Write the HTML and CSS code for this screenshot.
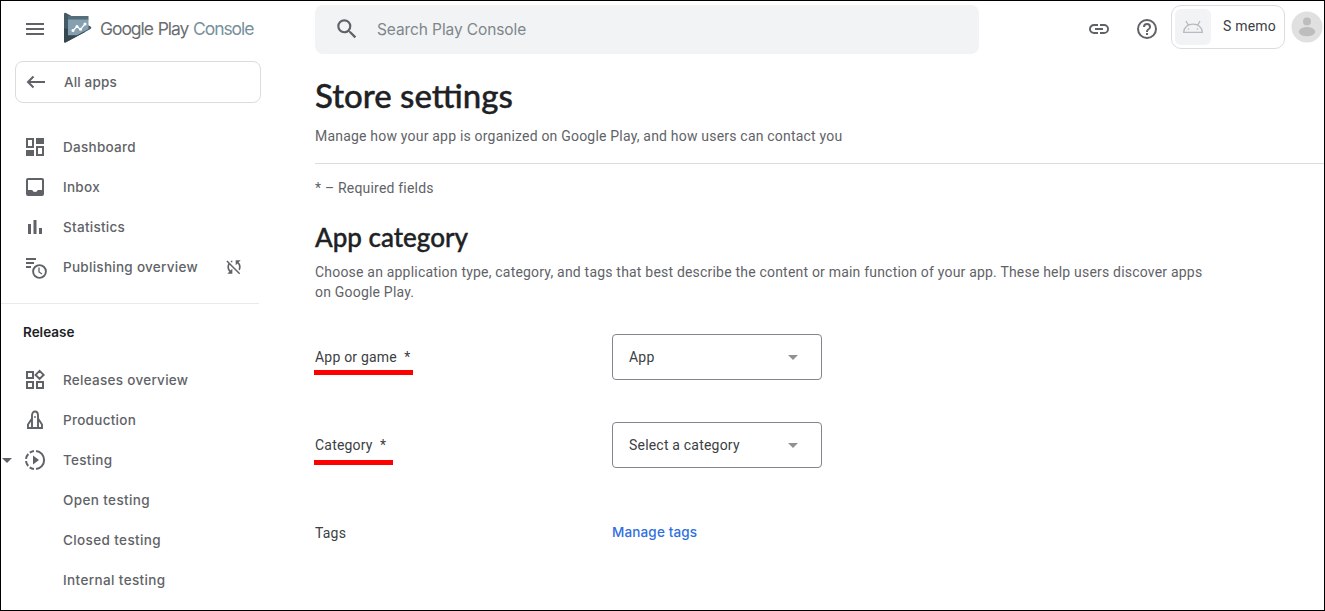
FILE: index.html
```html
<!DOCTYPE html>
<html lang="en">
<head>
<meta charset="utf-8">
<title>Store settings</title>
<link rel="stylesheet" href="styles.css">
</head>
<body>
<div class="frame">
  <aside class="sidebar">
    <div class="brand">
      <svg class="menu-icon" width="24" height="24" viewBox="0 0 24 24"><path d="M3 18h18v-2H3v2zm0-5h18v-2H3v2zm0-7v2h18V6H3z"/></svg>
      <svg class="logo" width="28" height="32" viewBox="0 0 28 32">
        <path fill="#455a64" d="M0 2.2Q0 .2 2 .9L26.500 14.500Q28.200 15.800 26.500 17L2 30.300Q0 31.200 0 29.500z"/>
        <path fill="#37474f" d="M0 16v13.500q0 1.700 2 .8L21 20z"/>
        <path fill="#546e7a" d="M4 4h20.500v4H4z"/>
        <path fill="#85a0b0" d="M4 7.500h20.500V17L13 23.200H4z"/>
        <path d="M9 18.500l4-4 3.500 3 4.500-5.500" fill="none" stroke="#fff" stroke-width="1.200"/>
        <g fill="#fff"><circle cx="9" cy="18.500" r="1.500"/><circle cx="13" cy="14.500" r="1.500"/><circle cx="16.500" cy="17.300" r="1.500"/><circle cx="21" cy="12" r="1.500"/></g>
      </svg>
      <span class="brand-name">Google Play <span class="brand-sub">Console</span></span>
    </div>
    <a class="all-apps">
      <svg width="20" height="14" viewBox="0 0 20 14"><path d="M7.500 1.500L2 7l5.500 5.500M2 7h17" fill="none" stroke="#5f6368" stroke-width="2"/></svg>
      <span>All apps</span>
    </a>
    <nav class="nav nav-main">
      <a class="item"><svg width="24" height="24" viewBox="0 0 24 24"><path d="M19 5v2h-4V5h4M9 5v6H5V5h4m10 8v6h-4v-6h4M9 17v2H5v-2h4M21 3h-8v6h8V3zM11 3H3v10h8V3zm10 8h-8v10h8V11zm-10 4H3v6h8v-6z"/><path d="M14 4h6v4h-6zM4 16h6v4H4z"/></svg><span>Dashboard</span></a>
      <a class="item"><svg width="24" height="24" viewBox="0 0 24 24"><path d="M19 3H5a2 2 0 0 0-2 2v14a2 2 0 0 0 2 2h14a2 2 0 0 0 2-2V5a2 2 0 0 0-2-2zm0 12h-4.180a3 3 0 0 1-5.640 0H5V5h14v10z"/></svg><span>Inbox</span></a>
      <a class="item"><svg width="24" height="24" viewBox="0 0 24 24"><path d="M5 9h3v10H5zM10.500 5h3v14h-3zM16 13h3v6h-3z"/></svg><span>Statistics</span></a>
      <a class="item"><svg width="24" height="24" viewBox="0 0 24 24"><path d="M3 3h10v2H3zM3 7h8v2H3zM3 11h5v2H3z"/><circle cx="16.500" cy="16.500" r="6.400" fill="none" stroke="#5f6368" stroke-width="1.900"/><path d="M16 12.500v4.500l3 2" fill="none" stroke="#5f6368" stroke-width="1.300"/></svg><span class="publishing">Publishing overview</span>
        <svg class="sync" width="20" height="20" viewBox="0 0 24 24"><path d="M10 6.350V4.260c-.8.210-1.550.540-2.230.960l1.460 1.460c.250-.120.500-.240.770-.330zM2.860 5.410l2.360 2.360A7.930 7.930 0 0 0 4 12c0 2.210.910 4.200 2.360 5.640L4 20h6v-6l-2.240 2.240A6 6 0 0 1 6 12c0-1 .250-1.940.680-2.770l11.500 11.500 1.270-1.270L4.140 4.140zM20 4h-6v6l2.240-2.240A6 6 0 0 1 18 12c0 1-.250 1.940-.680 2.770l1.460 1.460A7.930 7.930 0 0 0 20 12c0-2.210-.910-4.200-2.360-5.640L20 4z"/></svg></a>
    </nav>
    <h3 class="group">Release</h3>
    <nav class="nav">
      <a class="item"><svg width="24" height="24" viewBox="0 0 24 24"><g fill="none" stroke="#5f6368" stroke-width="2"><path d="M4 4h6v6H4zM4 14h6v6H4zM14 14h6v6h-6zM16.600 2.900l4 4-4 4-4-4z"/></g></svg><span>Releases overview</span></a>
      <a class="item"><svg width="24" height="24" viewBox="0 0 24 24"><g fill="none" stroke="#5f6368" stroke-width="1.900"><path d="M9 20V7.500c0-2.500 1.500-4 3-4s3 1.500 3 4V20M9 10.500l-4 6V20h14v-3.500l-4-6"/></g><circle cx="12" cy="9" r=".9"/></svg><span>Production</span></a>
      <a class="item"><svg class="caret" width="10" height="5" viewBox="0 0 10 5"><path d="M0 0h10L5 5z"/></svg><svg width="24" height="24" viewBox="0 0 24 24"><path d="M13.050 2.960a9.100 9.100 0 0 1 0 18.080" fill="none" stroke="#5f6368" stroke-width="2"/><path d="M11 2.950a9.100 9.100 0 0 0-4.200 1.700M5.300 6a9.100 9.100 0 0 0-2.300 4.900M3 13a9.100 9.100 0 0 0 2.200 5M6.700 19.400a9.100 9.100 0 0 0 4.300 1.650" fill="none" stroke="#5f6368" stroke-width="2"/><path d="M10 7.500v9l6-4.500z"/></svg><span>Testing</span></a>
      <a class="item child">Open testing</a>
      <a class="item child">Closed testing</a>
      <a class="item child">Internal testing</a>
    </nav>
  </aside>
  <main class="main">
    <header class="topbar">
      <div class="search">
        <svg width="26" height="26" viewBox="0 0 24 24"><path d="M15.500 14h-.790l-.280-.270A6.470 6.470 0 0 0 16 9.500 6.500 6.500 0 1 0 9.500 16c1.610 0 3.090-.590 4.230-1.570l.270.280v.790l5 4.990L20.490 19l-4.990-5zm-6 0a4.500 4.500 0 1 1 0-9 4.500 4.500 0 0 1 0 9z"/></svg>
        <span>Search Play Console</span>
      </div>
      <svg class="link" width="24" height="24" viewBox="0 0 24 24"><path d="M3.900 12c0-1.710 1.390-3.100 3.100-3.100h4V7H7a5 5 0 0 0 0 10h4v-1.900H7c-1.710 0-3.100-1.390-3.100-3.100zM8 13h8v-2H8v2zm9-6h-4v1.900h4a3.100 3.100 0 0 1 0 6.200h-4V17h4a5 5 0 0 0 0-10z"/></svg>
      <svg class="help" width="24" height="24" viewBox="0 0 24 24"><path d="M11 18h2v-2h-2v2zm1-16a10 10 0 1 0 0 20 10 10 0 0 0 0-20zm0 18a8 8 0 1 1 0-16 8 8 0 0 1 0 16zm0-14a4 4 0 0 0-4 4h2a2 2 0 1 1 4 0c0 2-3 1.750-3 5h2c0-2.250 3-2.500 3-5a4 4 0 0 0-4-4z"/></svg>
      <div class="chip">
        <span class="thumb"><svg width="22" height="14" viewBox="0 0 22 14"><path d="M1.700 12.300C2 7.200 6 4.200 11 4.200s9 3 9.300 8.100zM6.300 5L4 1M15.700 5L18 1" fill="none" stroke="#b8babd" stroke-width="1.300"/><circle cx="6.500" cy="9" r=".8" fill="#b8babd"/><circle cx="15.500" cy="9" r=".8" fill="#b8babd"/></svg></span>
        <span class="app-name">S memo</span>
      </div>
      <svg class="avatar" width="32" height="32" viewBox="0 0 32 32"><circle cx="16" cy="16" r="15.500" fill="#e0e0e0"/><circle cx="16" cy="10.500" r="4" fill="#bdbdbd"/><ellipse cx="16" cy="20.700" rx="8.200" ry="4.600" fill="#bdbdbd"/></svg>
    </header>
    <h1>Store settings</h1>
    <p class="subtitle">Manage how your app is organized on Google Play, and how users can contact you</p>
    <p class="required">* – Required fields</p>
    <h2>App category</h2>
    <p class="desc">Choose an application type, category, and tags that best describe the content or main function of your app. These help users discover apps<br>on Google Play.</p>
    <div class="form">
      <span class="label mark mark-type">App or game &nbsp;*</span>
      <div class="select"><span>App</span><svg width="10" height="5" viewBox="0 0 10 5"><path d="M0 0h10L5 5z"/></svg></div>
      <span class="label mark mark-category">Category &nbsp;*</span>
      <div class="select"><span>Select a category</span><svg width="10" height="5" viewBox="0 0 10 5"><path d="M0 0h10L5 5z"/></svg></div>
      <span class="label">Tags</span>
      <a class="manage">Manage tags</a>
    </div>
  </main>
</div>
</body>
</html>
```

FILE: styles.css
```css
* { box-sizing: border-box; }
body { margin: 0; background: #fff; font: 14px/20px Roboto, sans-serif; letter-spacing: .2px; color: #3c4043; overflow: hidden; }
h1, h2, h3, p { margin: 0; }
svg { fill: #5f6368; flex: none; display: block; }
.frame { display: flex; width: 1325px; height: 611px; border: 1px solid #000; }

.sidebar { width: 260px; flex: none; font: 500 13.5px/20px Inter, sans-serif; letter-spacing: .15px; }
.brand { display: flex; align-items: center; height: 56px; padding-left: 22px; }
.logo { margin: -2px 0 0 17px; }
.brand-name { margin: -1px 0 0 8px; font: 400 17.5px/24px Inter, sans-serif; letter-spacing: -1.07px; word-spacing: 1px; color: #6b6e71; white-space: nowrap; }
.brand-sub { color: #78909c; }
.all-apps { display: flex; align-items: center; gap: 18px; width: 246px; height: 42px; margin: 4px 0 0 14px; padding-left: 10px; border: 1px solid #dadce0; border-radius: 8px; color: #5f6368; }
.nav { padding-top: 8px; }
.nav-main { padding: 24px 0 16px; width: 258px; border-bottom: 1px solid #e8eaed; }
.item { position: relative; display: flex; align-items: center; height: 40px; padding-left: 22px; gap: 16px; color: #5f6368; white-space: nowrap; letter-spacing: .28px; }
.child { padding-left: 62px; letter-spacing: .38px; }
.publishing { width: 134px; }
.sync { margin-left: 11px; }
.caret { position: absolute; left: 1px; top: 18px; }
.group { margin: 18px 0 10px 22px; font: 600 13.5px/20px Inter, sans-serif; letter-spacing: 0; color: #202124; }

.main { flex: 1; min-width: 0; padding-left: 54px; }
.topbar { display: flex; height: 75px; padding-top: 4px; }
.search { display: flex; align-items: center; gap: 17px; width: 664px; height: 49px; padding: 0 0 1px 19px; border-radius: 8px; background: #f1f3f4; color: #80868b; font: 15.5px Inter, sans-serif; letter-spacing: -.1px; }
.link { margin: 12px 0 0 108px; }
.help { margin: 12px 0 0 24px; }
.chip { display: flex; align-items: center; gap: 12px; width: 114px; height: 44px; margin-left: 12px; padding-left: 3px; border: 1px solid #dadce0; border-radius: 10px; white-space: nowrap; }
.thumb { display: grid; place-items: center; width: 36px; height: 36px; border-radius: 6px; background: #f1f3f4; }
.app-name { margin-top: -2px; }
.avatar { margin: 6px 0 0 6px; }
h1 { height: 40px; font: 500 33px/38px Lato, sans-serif; color: #202124; letter-spacing: 0; -webkit-text-stroke: .4px; }
.subtitle { margin-top: 10px; padding-bottom: 17px; border-bottom: 1px solid #dadce0; color: #5f6368; }
.required { margin-top: 14px; color: #5f6368; }
h2 { margin-top: 23px; font: 500 26px/32px Lato, sans-serif; color: #202124; letter-spacing: 0; -webkit-text-stroke: .4px; }
.desc { margin-top: 9px; color: #5f6368; white-space: nowrap; }
.form { display: grid; grid-template-columns: 297px 210px; grid-auto-rows: 46px; row-gap: 42px; margin-top: 32px; align-items: center; }
.label { position: relative; justify-self: start; white-space: nowrap; }
.mark::after { content: ""; position: absolute; left: -1px; height: 5px; background: #f00; }
.mark-type::after { top: 23px; width: 99px; }
.mark-category::after { top: 25px; width: 79px; }
.select { display: flex; align-items: center; justify-content: space-between; height: 46px; padding: 0 23px 0 16px; border: 1px solid #80868b; border-radius: 4px; }
.select svg { fill: #8f9193; }
.manage { color: #2f6fdf; font: 500 13.5px/20px Inter, sans-serif; letter-spacing: .15px; padding-bottom: 2px; }
```
